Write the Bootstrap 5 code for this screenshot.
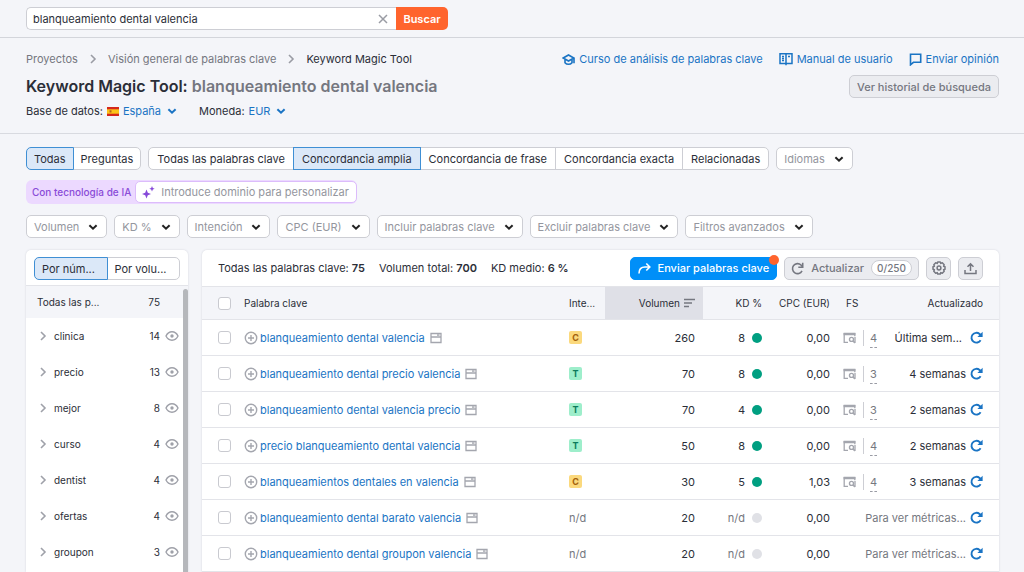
<!DOCTYPE html>
<html lang="es">
<head>
<meta charset="utf-8">
<meta name="viewport" content="width=device-width, initial-scale=1">
<title>Keyword Magic Tool: blanqueamiento dental valencia</title>
<link rel="stylesheet" href="https://cdn.jsdelivr.net/npm/bootstrap@5.3.0/dist/css/bootstrap.min.css">
<style>
  :root { --ink: #2b2e38; --muted: #757780; --soft: #94969e; --line: #cdced4; --hair: #e3e4e9; --blue: #1a74c4; --page: #f4f5f9; }
  body { background: var(--page); color: var(--ink); font: 11px/16px Inter, "Liberation Sans", sans-serif; }
  a { color: var(--blue); text-decoration: none; }
  svg { display: block; flex: none; fill: none; stroke: currentColor; }
  .px-page { padding-left: 26px; padding-right: 25px; }
  .dim { color: var(--muted); }
  .faint { color: #9a9ca4; }

  .topbar { padding-top: 7px; padding-bottom: 7px; border-bottom: 1px solid #d3d5db; }
  .finder { max-width: 422px; }
  .finder .field { height: 23px; border: 1px solid var(--line); border-right: 0; border-radius: 5px 0 0 5px; background: #fff; padding: 0 7px 0 6px; }
  .bare-input { border: 0; outline: 0; background: transparent; padding: 0; color: var(--ink); min-width: 0; }
  .bare-button { border: 0; background: transparent; padding: 0; color: inherit; }
  .btn-find { background: #ff642d; color: #fff; border: 0; border-radius: 0 5px 5px 0; font-weight: 600; width: 52px; padding: 0; }

  .intro { padding-top: 13px; padding-bottom: 14px; border-bottom: 1px solid #d8dae0; }
  .crumbs { gap: 10px; }
  .help-links { gap: 16px; }
  .help-links a { gap: 4px; }
  h1 { font-size: 16px; line-height: 22px; font-weight: 600; margin: 8px 0 6px; }
  h1 span { color: var(--muted); }
  .scope { gap: 22px; }
  .scope a { gap: 6px; }

  .ctl { height: 23px; padding: 0 7px; border: 1px solid var(--line); background: #fff; color: var(--ink); line-height: 20px; border-radius: 5px; white-space: nowrap; }
  .ctl:hover { border-color: #a9abb6; }
  .ctl-group .ctl + .ctl { margin-left: -1px; }
  .ctl.on, .ctl.on:hover { background: #dbe8f8; border-color: #3f8fd4; position: relative; z-index: 1; }
  .match .ctl { padding: 0 8px; }
  .ctl-drop { color: var(--soft); display: inline-flex; align-items: center; gap: 9px; padding-right: 8px; }
  .ctl-drop svg { color: #222; }
  .ctl-gray { background: #ebecf0; color: var(--muted); font-weight: 500; }
  .controls { padding-top: 13px; }
  .ctl-row { gap: 7px; }
  .ai-box { background: #ecd9ff; border-radius: 6px; height: 24px; padding: 1px 0 1px 6px; width: 331px; margin: 10px 0 11px; }
  .ai-box label { color: #8a4bd8; font-size: 10px; font-weight: 500; white-space: nowrap; }
  .ai-field { background: #fff; border: 1px solid #dcbcfb; border-radius: 5px; height: 22px; padding: 0 1px 0 6px; gap: 6px; color: #8649d9; }
  .ai-field input::placeholder { color: var(--soft); opacity: 1; }

  .board { gap: 14px; padding-top: 12px; min-height: 0; }
  .panel { background: #fff; border-radius: 5px 5px 0 0; box-shadow: 0 0 2px #cfd0d9; overflow: hidden; }
  .groups { width: 162px; font-size: 10px; position: relative; flex: none; }
  .switch { padding: 7px 8px 5px; font-size: 11px; }
  .switch .ctl { flex: 1 1 0; min-width: 0; text-align: left; }
  .group-total { height: 33px; background: var(--page); border-top: 1px solid var(--hair); padding: 0 28px 0 11px; }
  .group-item { height: 36px; padding: 0 9px 0 12px; }
  .group-item .name { margin-left: 6px; }
  .group-item svg { color: #9fa1a9; }
  .group-item .eye { margin-left: 5px; }
  .thumb { position: absolute; top: 39px; right: 0; bottom: 0; width: 5px; border-radius: 3px 3px 0 0; background: #b5b7bb; }

  .summary { height: 36px; padding: 0 16px; }
  .totals { gap: 14px; }
  .totals b { font-weight: 600; }
  .actions { gap: 7px; }
  .actions .ctl { display: inline-flex; align-items: center; gap: 7px; padding: 0 6px; }
  .actions .square { width: 25px; padding: 0; justify-content: center; }
  .actions .btn-send { background: #008ff8; border-color: #008ff8; color: #fff; font-weight: 500; position: relative; padding: 0 7px; }
  .btn-send i { position: absolute; top: -3px; right: -3px; width: 10px; height: 10px; border-radius: 50%; background: #ff642d; }
  .pill { border: 1px solid var(--line); background: #fff; border-radius: 8px; font-size: 10px; line-height: 14px; padding: 0 5px; }

  .keys { table-layout: fixed; width: 100%; border-collapse: separate; border-spacing: 0; }
  .keys th { height: 34px; background: var(--page); font-size: 10px; font-weight: 400; border-top: 1px solid var(--hair); border-bottom: 1px solid var(--hair); padding: 0; white-space: nowrap; }
  .keys td { height: 36px; border-bottom: 1px solid var(--hair); padding: 0; white-space: nowrap; }
  .keys th.sorted { background: #dfe0e7; }
  .w-tick { width: 42px; } .w-int { width: 36px; } .w-vol { width: 98px; } .w-kd { width: 59px; } .w-cpc { width: 68px; } .w-fs { width: 50px; } .w-upd { width: 119px; }
  .keys input { display: block; appearance: none; width: 13px; height: 13px; margin: 0 0 0 16px; border: 1px solid #c9cad0; border-radius: 3px; background: #fff; }
  .keys input:checked { background: var(--blue); }
  .keys td svg { color: #a4a6ae; }
  .keys td .again { color: var(--blue); }
  .word { gap: 2px; }
  .word svg:last-child { margin-left: 3px; }
  .tag { width: 13px; height: 13px; border-radius: 2px; font-size: 9px; line-height: 13px; font-weight: 700; text-align: center; display: block; }
  .tag-c { background: #fbd97d; color: #a2600a; }
  .tag-t { background: #9eeecb; color: #0b7a5b; }
  .keys .vol { padding-right: 8px; }
  .kd { gap: 7px; }
  .dot { width: 10px; height: 10px; border-radius: 50%; background: #009f81; }
  .dot.none { background: #e0e1e6; }
  .serp { padding-left: 13px; gap: 7px; }
  .serp span { border-left: 1px solid var(--line); height: 16px; padding-left: 6px; }
  .serp a { color: var(--muted); border-bottom: 1px dashed #9a9ca5; display: block; height: 18px; }
  .upd { padding-right: 16px; gap: 4px; }
</style>
</head>
<body class="vh-100 overflow-hidden d-flex flex-column">

<svg width="0" height="0" class="position-absolute" aria-hidden="true">
  <symbol id="down" viewBox="0 0 10 10"><path d="M1.400 3.200 5 6.700l3.600-3.500" stroke-width="2"/></symbol>
  <symbol id="right" viewBox="0 0 10 10"><path d="M3 1l4 4-4 4" stroke-width="1.600"/></symbol>
  <symbol id="plus" viewBox="0 0 14 14"><circle cx="7" cy="7" r="5.700" stroke-width="1.400"/><path d="M7 4v6M4 7h6" stroke-width="1.400"/></symbol>
  <symbol id="feat" viewBox="0 0 12 12"><path d="M1 1.500h10v9H1zM1 5h10M7 3.200h2.500" stroke-width="1.300"/></symbol>
  <symbol id="eye" viewBox="0 0 14 12"><path d="M1 6c1.300-2.700 3.400-4.200 6-4.200S11.700 3.300 13 6c-1.300 2.700-3.400 4.200-6 4.200S2.300 8.700 1 6z" stroke-width="1.400"/><circle cx="7" cy="6" r="1.700" fill="currentColor" stroke="none"/></symbol>
  <symbol id="again" viewBox="0 0 13 13"><path d="M10.600 9.200A4.900 4.900 0 1 1 9.600 3l1.400 1.200" stroke-width="1.900"/><path d="M12.600.8v5.200H7.400z" fill="currentColor" stroke="none"/></symbol>
  <symbol id="again-thin" viewBox="0 0 13 13"><path d="M11 8.800A5 5 0 1 1 10 3l1.500 1.700" stroke-width="1.600"/><path d="M11.700.8v4.400H7.300" stroke-width="1.600"/></symbol>
  <symbol id="serp" viewBox="0 0 13 12"><path d="M5 10.400H1.200V1.600h10.600v2.600" stroke-width="1.300"/><path d="M.6.800h11.800v2.400H.6z" fill="currentColor" stroke="none"/><circle cx="8.500" cy="7.400" r="2" stroke-width="1.400"/><path d="M12 5v6M10 9l1.800 2" stroke-width="1.300"/></symbol>
</svg>

<header class="topbar px-page flex-shrink-0">
  <form class="finder d-flex" role="search">
    <div class="field d-flex align-items-center flex-fill">
      <input class="bare-input flex-fill" type="text" aria-label="Palabra clave" value="blanqueamiento dental valencia">
      <button class="bare-button" type="button" aria-label="Borrar"><svg class="faint" width="12" height="12" viewBox="0 0 12 12"><path d="M2 2l8 8M10 2l-8 8" stroke-width="1.500"/></svg></button>
    </div>
    <button class="btn-find" type="submit">Buscar</button>
  </form>
</header>

<section class="intro px-page flex-shrink-0 d-flex justify-content-between">
  <div>
    <nav aria-label="Ruta">
      <ol class="crumbs list-unstyled d-flex align-items-center mb-0">
        <li><a class="dim" href="#">Proyectos</a></li>
        <li aria-hidden="true" class="faint"><svg width="10" height="10"><use href="#right"/></svg></li>
        <li><a class="dim" href="#">Visión general de palabras clave</a></li>
        <li aria-hidden="true" class="faint"><svg width="10" height="10"><use href="#right"/></svg></li>
        <li aria-current="page">Keyword Magic Tool</li>
      </ol>
    </nav>
    <h1>Keyword Magic Tool: <span>blanqueamiento dental valencia</span></h1>
    <div class="scope d-flex">
      <div class="d-flex align-items-center gap-1">Base de datos:
        <svg width="12" height="9" viewBox="0 0 12 9"><path fill="#d5281b" stroke="none" d="M0 0h12v9H0z"/><path fill="#fcc419" stroke="none" d="M0 2.300h12v4.400H0z"/><path fill="#b5651d" stroke="none" d="M2.500 3.300h2v2.200h-2z"/></svg>
        <a href="#" class="d-flex align-items-center">España <svg width="10" height="10"><use href="#down"/></svg></a></div>
      <div class="d-flex align-items-center gap-1">Moneda: <a href="#" class="d-flex align-items-center">EUR <svg width="10" height="10"><use href="#down"/></svg></a></div>
    </div>
  </div>
  <div class="d-flex flex-column align-items-end gap-2">
    <div class="help-links d-flex">
      <a href="#" class="d-flex align-items-center"><svg width="13" height="13" viewBox="0 0 13 13"><path d="M1.200 5 6.500 2l5.300 3-5.300 3zM3 6.500v3.200c1.800 2.100 5.200 2.100 7 0V6.500M12 5v5.300" stroke-width="1.600"/></svg>Curso de análisis de palabras clave</a>
      <a href="#" class="d-flex align-items-center"><svg width="14" height="14" viewBox="0 0 14 14"><path d="M1 1.700h12v9.800H1zM7 1.700v11.500M3 4.500h2M3 6.500h2M3 8.500h2M9 4.500h2" stroke-width="1.500"/></svg>Manual de usuario</a>
      <a href="#" class="d-flex align-items-center"><svg width="13" height="13" viewBox="0 0 13 13"><path d="M1.500 1.300h10.200v8H4.400l-2.900 2.500z" stroke-width="1.600"/></svg>Enviar opinión</a>
    </div>
    <button class="ctl ctl-gray" type="button">Ver historial de búsqueda</button>
  </div>
</section>

<section class="controls px-page flex-shrink-0">
  <div class="ctl-row d-flex">
    <div class="ctl-group btn-group">
      <button type="button" class="ctl on rounded-end-0">Todas</button><button type="button" class="ctl rounded-start-0">Preguntas</button>
    </div>
    <div class="ctl-group match btn-group">
      <button type="button" class="ctl rounded-end-0">Todas las palabras clave</button><button type="button" class="ctl on rounded-0">Concordancia amplia</button><button type="button" class="ctl rounded-0">Concordancia de frase</button><button type="button" class="ctl rounded-0">Concordancia exacta</button><button type="button" class="ctl rounded-start-0">Relacionadas</button>
    </div>
    <button type="button" class="ctl ctl-drop">Idiomas <svg width="10" height="10"><use href="#down"/></svg></button>
  </div>
  <div class="ai-box d-flex align-items-center">
    <label for="domain" class="me-1">Con tecnología de IA</label>
    <div class="ai-field d-flex align-items-center flex-fill">
      <svg width="13" height="13" viewBox="0 0 13 13"><path fill="currentColor" stroke="none" d="M4.500 3.500 5.800 6.700 9 8 5.800 9.300 4.500 12.500 3.200 9.300 0 8 3.200 6.700zM10 0l.8 1.900 1.900.8-1.900.8-.8 1.900-.8-1.900-1.900-.8 1.900-.8z"/></svg>
      <input id="domain" class="bare-input flex-fill" type="text" placeholder="Introduce dominio para personalizar">
    </div>
  </div>
  <div class="ctl-row d-flex">
    <button type="button" class="ctl ctl-drop">Volumen <svg width="10" height="10"><use href="#down"/></svg></button>
    <button type="button" class="ctl ctl-drop">KD % <svg width="10" height="10"><use href="#down"/></svg></button>
    <button type="button" class="ctl ctl-drop">Intención <svg width="10" height="10"><use href="#down"/></svg></button>
    <button type="button" class="ctl ctl-drop">CPC (EUR) <svg width="10" height="10"><use href="#down"/></svg></button>
    <button type="button" class="ctl ctl-drop">Incluir palabras clave <svg width="10" height="10"><use href="#down"/></svg></button>
    <button type="button" class="ctl ctl-drop">Excluir palabras clave <svg width="10" height="10"><use href="#down"/></svg></button>
    <button type="button" class="ctl ctl-drop">Filtros avanzados <svg width="10" height="10"><use href="#down"/></svg></button>
  </div>
</section>

<main class="board px-page d-flex flex-fill">
  <aside class="panel groups">
    <div class="switch ctl-group d-flex">
      <button type="button" class="ctl on rounded-end-0">Por núm...</button><button type="button" class="ctl rounded-start-0">Por volu...</button>
    </div>
    <div class="group-total d-flex align-items-center justify-content-between"><span>Todas las p...</span><span>75</span></div>
    <div class="group-item d-flex align-items-center"><svg width="10" height="10"><use href="#right"/></svg><span class="name me-auto">clinica</span>14<svg class="eye" width="14" height="12"><use href="#eye"/></svg></div>
    <div class="group-item d-flex align-items-center"><svg width="10" height="10"><use href="#right"/></svg><span class="name me-auto">precio</span>13<svg class="eye" width="14" height="12"><use href="#eye"/></svg></div>
    <div class="group-item d-flex align-items-center"><svg width="10" height="10"><use href="#right"/></svg><span class="name me-auto">mejor</span>8<svg class="eye" width="14" height="12"><use href="#eye"/></svg></div>
    <div class="group-item d-flex align-items-center"><svg width="10" height="10"><use href="#right"/></svg><span class="name me-auto">curso</span>4<svg class="eye" width="14" height="12"><use href="#eye"/></svg></div>
    <div class="group-item d-flex align-items-center"><svg width="10" height="10"><use href="#right"/></svg><span class="name me-auto">dentist</span>4<svg class="eye" width="14" height="12"><use href="#eye"/></svg></div>
    <div class="group-item d-flex align-items-center"><svg width="10" height="10"><use href="#right"/></svg><span class="name me-auto">ofertas</span>4<svg class="eye" width="14" height="12"><use href="#eye"/></svg></div>
    <div class="group-item d-flex align-items-center"><svg width="10" height="10"><use href="#right"/></svg><span class="name me-auto">groupon</span>3<svg class="eye" width="14" height="12"><use href="#eye"/></svg></div>
    <div class="thumb"></div>
  </aside>

  <section class="panel flex-fill">
    <div class="summary d-flex align-items-center justify-content-between">
      <div class="totals d-flex">
        <span>Todas las palabras clave: <b>75</b></span><span>Volumen total: <b>700</b></span><span>KD medio: <b>6 %</b></span>
      </div>
      <div class="actions d-flex">
        <button type="button" class="ctl btn-send"><svg width="13" height="13" viewBox="0 0 13 13"><path d="M1 11.500C1 7 3.500 5 7 5h4.500M8.300 1.500 11.800 5 8.300 8.500" stroke-width="1.600"/></svg>Enviar palabras clave<i></i></button>
        <button type="button" class="ctl ctl-gray"><svg width="13" height="13"><use href="#again-thin"/></svg>Actualizar <span class="pill">0/250</span></button>
        <button type="button" class="ctl ctl-gray square" aria-label="Ajustes"><svg width="14" height="14" viewBox="0 0 14 14"><path d="M5.700 1h2.600l.5 1.400 1.500-.6 1.900 1.900-.6 1.500 1.400.5v2.600l-1.400.5.6 1.500-1.900 1.900-1.500-.6-.5 1.400H5.700l-.5-1.400-1.500.6-1.900-1.900.6-1.500L1 8.300V5.700l1.400-.5-.6-1.500 1.900-1.900 1.500.6z" stroke-width="1.500" stroke-linejoin="round"/><circle cx="7" cy="7" r="1.900" stroke-width="1.500"/></svg></button>
        <button type="button" class="ctl ctl-gray square" aria-label="Exportar"><svg width="13" height="13" viewBox="0 0 13 13"><path d="M1 8v3.500h11V8M6.500 9V2M3.500 4.700l3-3 3 3" stroke-width="1.500"/></svg></button>
      </div>
    </div>
    <table class="keys">
      <colgroup><col class="w-tick"><col><col class="w-int"><col class="w-vol"><col class="w-kd"><col class="w-cpc"><col class="w-fs"><col class="w-upd"></colgroup>
      <thead>
        <tr>
          <th><input type="checkbox" aria-label="Seleccionar todo"></th>
          <th>Palabra clave</th><th>Inte...</th>
          <th class="sorted vol"><div class="d-flex align-items-center justify-content-end gap-1">Volumen <svg class="dim" width="11" height="10" viewBox="0 0 11 10"><path d="M0 1.500h11M0 5h8M0 8.500h5" stroke-width="1.400"/></svg></div></th>
          <th class="text-end">KD %</th><th class="text-end">CPC (EUR)</th><th><div class="ps-3">FS</div></th><th class="text-end"><div class="pe-3">Actualizado</div></th>
        </tr>
      </thead>
      <tbody>
        <tr>
          <td><input type="checkbox" aria-label="blanqueamiento dental valencia"></td>
          <td><div class="word d-flex align-items-center"><svg width="14" height="14"><use href="#plus"/></svg><a href="#">blanqueamiento dental valencia</a><svg width="12" height="12"><use href="#feat"/></svg></div></td>
          <td><span class="tag tag-c">C</span></td><td class="vol text-end">260</td>
          <td><div class="kd d-flex align-items-center justify-content-end">8<span class="dot"></span></div></td><td class="text-end">0,00</td>
          <td><div class="serp d-flex align-items-center"><svg width="13" height="12"><use href="#serp"/></svg><span><a href="#">4</a></span></div></td>
          <td><div class="upd d-flex align-items-center justify-content-end">Última sem...<svg class="again ms-1" width="13" height="13"><use href="#again"/></svg></div></td>
        </tr>
        <tr>
          <td><input type="checkbox" aria-label="blanqueamiento dental precio valencia"></td>
          <td><div class="word d-flex align-items-center"><svg width="14" height="14"><use href="#plus"/></svg><a href="#">blanqueamiento dental precio valencia</a><svg width="12" height="12"><use href="#feat"/></svg></div></td>
          <td><span class="tag tag-t">T</span></td><td class="vol text-end">70</td>
          <td><div class="kd d-flex align-items-center justify-content-end">8<span class="dot"></span></div></td><td class="text-end">0,00</td>
          <td><div class="serp d-flex align-items-center"><svg width="13" height="12"><use href="#serp"/></svg><span><a href="#">3</a></span></div></td>
          <td><div class="upd d-flex align-items-center justify-content-end">4 semanas<svg class="again" width="13" height="13"><use href="#again"/></svg></div></td>
        </tr>
        <tr>
          <td><input type="checkbox" aria-label="blanqueamiento dental valencia precio"></td>
          <td><div class="word d-flex align-items-center"><svg width="14" height="14"><use href="#plus"/></svg><a href="#">blanqueamiento dental valencia precio</a><svg width="12" height="12"><use href="#feat"/></svg></div></td>
          <td><span class="tag tag-t">T</span></td><td class="vol text-end">70</td>
          <td><div class="kd d-flex align-items-center justify-content-end">4<span class="dot"></span></div></td><td class="text-end">0,00</td>
          <td><div class="serp d-flex align-items-center"><svg width="13" height="12"><use href="#serp"/></svg><span><a href="#">3</a></span></div></td>
          <td><div class="upd d-flex align-items-center justify-content-end">2 semanas<svg class="again" width="13" height="13"><use href="#again"/></svg></div></td>
        </tr>
        <tr>
          <td><input type="checkbox" aria-label="precio blanqueamiento dental valencia"></td>
          <td><div class="word d-flex align-items-center"><svg width="14" height="14"><use href="#plus"/></svg><a href="#">precio blanqueamiento dental valencia</a><svg width="12" height="12"><use href="#feat"/></svg></div></td>
          <td><span class="tag tag-t">T</span></td><td class="vol text-end">50</td>
          <td><div class="kd d-flex align-items-center justify-content-end">8<span class="dot"></span></div></td><td class="text-end">0,00</td>
          <td><div class="serp d-flex align-items-center"><svg width="13" height="12"><use href="#serp"/></svg><span><a href="#">4</a></span></div></td>
          <td><div class="upd d-flex align-items-center justify-content-end">2 semanas<svg class="again" width="13" height="13"><use href="#again"/></svg></div></td>
        </tr>
        <tr>
          <td><input type="checkbox" aria-label="blanqueamientos dentales en valencia"></td>
          <td><div class="word d-flex align-items-center"><svg width="14" height="14"><use href="#plus"/></svg><a href="#">blanqueamientos dentales en valencia</a><svg width="12" height="12"><use href="#feat"/></svg></div></td>
          <td><span class="tag tag-c">C</span></td><td class="vol text-end">30</td>
          <td><div class="kd d-flex align-items-center justify-content-end">5<span class="dot"></span></div></td><td class="text-end">1,03</td>
          <td><div class="serp d-flex align-items-center"><svg width="13" height="12"><use href="#serp"/></svg><span><a href="#">4</a></span></div></td>
          <td><div class="upd d-flex align-items-center justify-content-end">3 semanas<svg class="again" width="13" height="13"><use href="#again"/></svg></div></td>
        </tr>
        <tr>
          <td><input type="checkbox" aria-label="blanqueamiento dental barato valencia"></td>
          <td><div class="word d-flex align-items-center"><svg width="14" height="14"><use href="#plus"/></svg><a href="#">blanqueamiento dental barato valencia</a><svg width="12" height="12"><use href="#feat"/></svg></div></td>
          <td class="dim">n/d</td><td class="vol text-end">20</td>
          <td><div class="kd dim d-flex align-items-center justify-content-end">n/d<span class="dot none"></span></div></td><td class="text-end">0,00</td>
          <td colspan="2"><div class="upd dim d-flex align-items-center justify-content-end">Para ver métricas...<svg class="again" width="13" height="13"><use href="#again"/></svg></div></td>
        </tr>
        <tr>
          <td><input type="checkbox" aria-label="blanqueamiento dental groupon valencia"></td>
          <td><div class="word d-flex align-items-center"><svg width="14" height="14"><use href="#plus"/></svg><a href="#">blanqueamiento dental groupon valencia</a><svg width="12" height="12"><use href="#feat"/></svg></div></td>
          <td class="dim">n/d</td><td class="vol text-end">20</td>
          <td><div class="kd dim d-flex align-items-center justify-content-end">n/d<span class="dot none"></span></div></td><td class="text-end">0,00</td>
          <td colspan="2"><div class="upd dim d-flex align-items-center justify-content-end">Para ver métricas...<svg class="again" width="13" height="13"><use href="#again"/></svg></div></td>
        </tr>
      </tbody>
    </table>
  </section>
</main>
<script src="https://cdn.jsdelivr.net/npm/bootstrap@5.3.0/dist/js/bootstrap.bundle.min.js"></script>
</body>
</html>
